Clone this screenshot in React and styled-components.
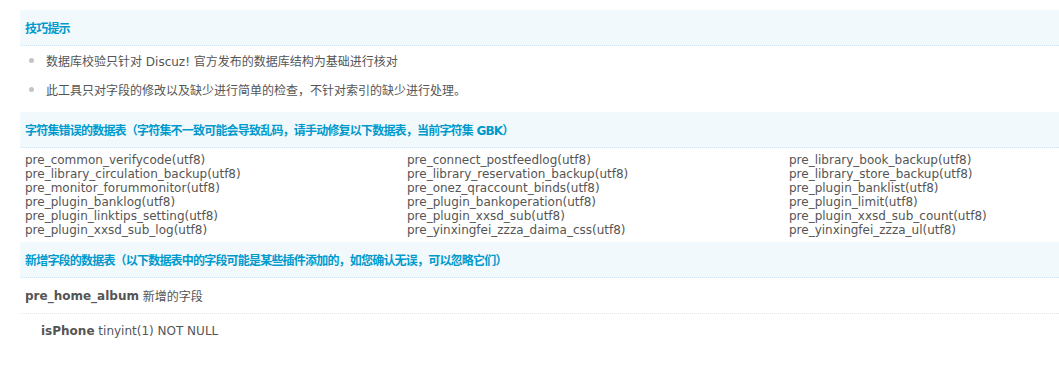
import React from 'react';
import styled, { createGlobalStyle } from 'styled-components';

const GlobalStyle = createGlobalStyle`
    body {
        margin: 0;
        background: #fff;
        color: #555;
        font: 12px "DejaVu Sans", "Noto Sans CJK SC", sans-serif;
        overflow: hidden;
    }
`;

const Page = styled.div`
    padding: 10px 0 0 20px;
    overflow: hidden;
`;

const SectionHead = styled.div`
    display: flex;
    align-items: center;
    height: 35px;
    padding: 0 5px;
    margin-top: ${(props) => props.gap || 0}px;
    background: #f2f9fd;
    border-bottom: 1px dotted #cfe3f2;
    color: #0099cc;
    font-weight: bold;
    letter-spacing: -0.8px;
    white-space: nowrap;
    overflow: hidden;
`;

const TipRow = styled.div`
    display: flex;
    align-items: center;
    gap: 12px;
    height: 29px;
    padding-left: 9px;
    white-space: nowrap;

    &::before {
        content: '';
        width: 5px;
        height: 5px;
        border-radius: 50%;
        background: #c4c4c4;
    }
`;

const TableGrid = styled.div`
    display: grid;
    grid-template-columns: repeat(3, 382px);
    padding: 5px 0 5px 5px;
    line-height: 14px;
    overflow: hidden;
    white-space: nowrap;
`;

const FieldRow = styled.div`
    display: flex;
    align-items: center;
    height: ${(props) => (props.indent ? 34 : 35)}px;
    padding-left: ${(props) => (props.indent ? 21 : 5)}px;
    border-bottom: ${(props) => (props.indent ? 'none' : '1px dotted #e6e6e6')};
    white-space: pre;

    b {
        color: #555;
    }
`;

const tips = [
    '数据库校验只针对 Discuz! 官方发布的数据库结构为基础进行核对',
    '此工具只对字段的修改以及缺少进行简单的检查，不针对索引的缺少进行处理。'
];

const badTables = [
    'pre_common_verifycode', 'pre_connect_postfeedlog', 'pre_library_book_backup',
    'pre_library_circulation_backup', 'pre_library_reservation_backup', 'pre_library_store_backup',
    'pre_monitor_forummonitor', 'pre_onez_qraccount_binds', 'pre_plugin_banklist',
    'pre_plugin_banklog', 'pre_plugin_bankoperation', 'pre_plugin_limit',
    'pre_plugin_linktips_setting', 'pre_plugin_xxsd_sub', 'pre_plugin_xxsd_sub_count',
    'pre_plugin_xxsd_sub_log', 'pre_yinxingfei_zzza_daima_css', 'pre_yinxingfei_zzza_ul'
];

export default function App() {
    return (
        <Page>
            <GlobalStyle />
            <SectionHead>技巧提示</SectionHead>
            {tips.map((tip) => (
                <TipRow key={tip}>{tip}</TipRow>
            ))}

            <SectionHead gap={8}>
                字符集错误的数据表（字符集不一致可能会导致乱码，请手动修复以下数据表，当前字符集 GBK）
            </SectionHead>
            <TableGrid>
                {badTables.map((name) => (
                    <span key={name}>{name}(utf8)</span>
                ))}
            </TableGrid>

            <SectionHead>
                新增字段的数据表（以下数据表中的字段可能是某些插件添加的，如您确认无误，可以忽略它们）
            </SectionHead>
            <FieldRow>
                <b>pre_home_album</b> 新增的字段
            </FieldRow>
            <FieldRow indent>
                <b>isPhone</b> tinyint(1) NOT NULL
            </FieldRow>
        </Page>
    );
}
